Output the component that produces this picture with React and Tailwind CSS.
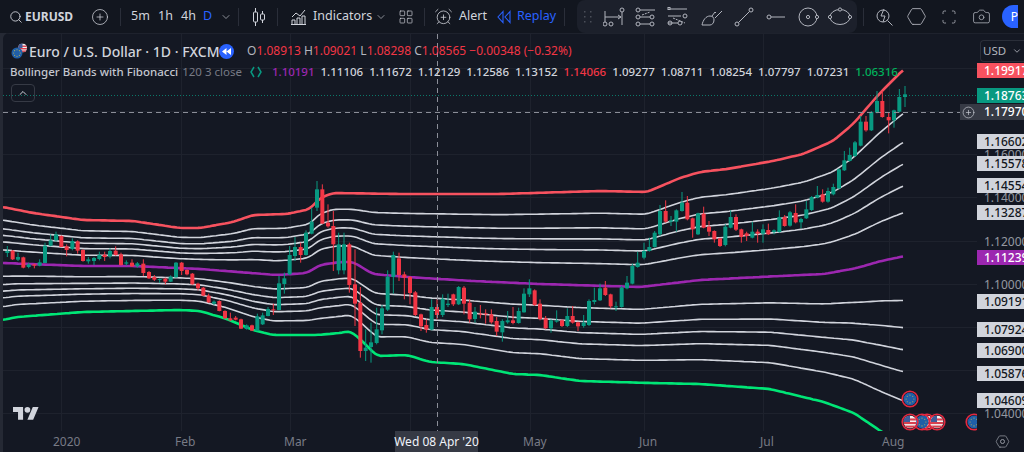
/*
 * EURUSD chart page - dark trading terminal with bollinger/fibonacci bands
 * candles are read off the screenshot in 3x crop coords and scaled at load
 */
import { Search, CirclePlus, ChevronDown, ChevronUp, LayoutGrid, AlarmClockPlus, Hexagon, Scan, Camera } from 'lucide-react';

const font = 'font-["Noto_Sans",sans-serif]';

// [x, bodyTop, bodyBottom, wickTop, wickBottom, colour]
const seg1 = [
  [22,210,216,195,228,'g'],[38,209,235,207,237,'r'],[54,228,236,215,240,'g'],[70,229,260,227,262,'r'],[86,250,258,245,262,'g'],[103,250,254,248,262,'r'],
  [119,244,254,235,256,'g'],[135,194,246,185,246,'g'],[152,178,194,160,196,'g'],[168,160,178,152,182,'g'],[184,165,198,163,198,'r'],[200,196,207,190,226,'r'],
  [217,180,204,172,208,'g'],[233,181,209,178,218,'r'],[249,207,240,205,242,'r'],[265,235,241,228,248,'g'],[282,231,240,228,252,'g'],[298,222,234,212,238,'g'],
  [314,221,228,212,240,'r'],[330,210,226,202,232,'g'],[347,209,222,196,224,'r'],[363,220,252,215,254,'r'],[379,244,248,238,254,'g'],[396,245,256,235,258,'r'],
  [412,247,256,243,260,'g'],[430,248,276,235,285,'r'],[447,273,292,270,294,'r'],[463,288,296,282,300,'r'],[479,294,297,292,306,'g'],[496,293,302,290,310,'r'],
  [512,287,302,283,303,'g'],[528,245,289,243,290,'g'],[545,245,270,243,282,'r'],[561,267,280,265,283,'r'],[577,278,310,276,311,'r'],[594,308,322,305,328,'r'],
  [610,320,344,318,345,'r'],[626,344,364,338,366,'r'],[642,362,368,358,372,'g'],[658,360,390,358,391,'r'],[675,390,412,388,414,'r'],[691,412,418,395,420,'r'],
  [707,410,416,405,418,'r'],[723,415,443,413,444,'r'],[740,433,444,430,446,'g'],[756,433,449,431,450,'r'],[772,406,449,398,450,'g'],[788,403,430,395,432,'g'],
  [804,384,405,378,406,'g'],[820,385,388,368,402,'r'],[837,307,387,285,388,'g'],[853,292,309,275,338,'g'],[869,222,280,195,282,'g'],[885,198,225,168,240,'g'],
  [902,198,222,185,245,'r'],[918,155,222,148,224,'g'],[935,122,158,80,160,'g'],[951,25,80,0,90,'g'],[967,25,128,10,128,'r'],[984,125,136,70,140,'r'],
  [1000,135,190,90,270,'r'],
];

const seg2 = [
  [-4,40,118,5,130,'g'],[12,40,118,5,130,'g'],[28,40,162,35,185,'r'],[45,160,218,55,285,'r'],[61,215,360,168,380,'r'],[77,350,360,295,390,'g'],[93,334,348,275,395,'g'],
  [110,295,336,230,340,'g'],[126,232,298,222,310,'g'],[143,137,236,118,240,'g'],[160,72,138,62,188,'g'],[177,82,132,65,150,'r'],[193,130,140,122,205,'r'],
  [210,138,186,135,220,'r'],[226,184,252,180,255,'r'],[243,250,286,248,300,'r'],[259,282,296,265,305,'r'],[275,228,296,205,298,'g'],[291,228,252,205,265,'r'],
  [308,203,252,190,258,'g'],[324,218,222,188,228,'g'],[340,190,220,188,225,'r'],[356,168,220,165,222,'g'],[372,170,218,165,250,'r'],[389,215,265,205,275,'r'],
  [405,242,264,228,275,'g'],[421,248,250,222,262,'r'],[437,247,250,235,278,'r'],[454,250,274,235,278,'r'],[470,270,302,258,315,'r'],[487,270,304,265,332,'g'],
  [503,268,274,240,278,'g'],[519,268,276,228,280,'r'],[536,240,276,230,278,'g'],[552,188,244,172,245,'g'],[568,172,190,145,198,'g'],[584,178,222,175,225,'r'],
  [600,218,264,205,268,'r'],[617,262,292,255,295,'r'],[633,268,292,265,305,'g'],[650,268,272,238,275,'g'],[666,268,285,265,288,'r'],[682,255,285,232,288,'g'],
  [698,255,275,225,278,'r'],[714,274,286,272,300,'r'],[731,275,285,252,290,'g'],[747,210,282,205,285,'g'],[763,207,213,170,220,'g'],[780,172,208,158,210,'g'],
  [796,170,192,150,195,'r'],[812,190,226,188,232,'r'],[828,226,229,212,240,'g'],[845,170,228,165,230,'g'],[861,155,172,135,175,'g'],[877,105,158,98,160,'g'],
  [893,95,108,62,110,'g'],
];

const seg3 = [
  [72,570,590,545,595,'g'],[88,558,570,530,572,'g'],[104,515,558,510,560,'g'],[120,450,520,432,525,'g'],[137,450,482,418,485,'r'],[153,478,482,465,495,'g'],[169,448,482,445,512,'g'],
  [186,425,450,393,452,'g'],[202,425,475,405,478,'r'],[218,472,505,470,530,'r'],[234,457,520,455,522,'g'],[251,458,500,437,502,'r'],[267,497,512,480,525,'r'],
  [283,510,535,508,545,'r'],[300,532,555,530,558,'r'],[316,497,552,490,556,'g'],[332,468,500,448,502,'g'],[348,468,506,460,510,'r'],[364,505,528,503,545,'r'],
  [380,517,525,512,540,'r'],[397,512,530,482,532,'g'],[413,512,518,505,545,'r'],[429,505,518,490,545,'g'],[445,507,520,488,522,'r'],[462,508,513,505,520,'g'],
  [478,468,513,448,515,'g'],[494,468,495,462,497,'r'],[510,454,494,450,497,'g'],[527,456,484,430,487,'r'],[543,474,484,470,502,'g'],[559,445,472,420,474,'g'],
  [575,408,447,405,450,'g'],[592,402,410,375,412,'g'],[608,400,422,385,425,'r'],[624,390,422,380,425,'g'],[640,378,400,368,403,'g'],[657,325,382,322,385,'g'],
  [673,298,328,270,330,'g'],[689,282,300,260,302,'g'],[705,244,285,240,288,'g'],[722,182,254,165,256,'g'],[738,182,208,165,212,'r'],[754,153,208,150,210,'g'],
  [771,120,155,90,157,'g'],[787,120,168,90,170,'r'],[806,168,178,155,217,'r'],[822,148,178,146,200,'g'],[838,108,152,84,155,'g'],[855,100,108,75,138,'g'],
];

const scaleSeg = (rows, ox, oy) => rows.map(([x, t, b, wt, wb, c]) => ({
  x: ox + x / 3, t: oy + t / 3, b: oy + b / 3, wt: oy + wt / 3, wb: oy + wb / 3, c,
}));

const candles = [...scaleSeg(seg1, 0, 180), ...scaleSeg(seg2, 340, 230), ...scaleSeg(seg3, 620, 60)];

const redPts = [[3,206],[33,212],[83,219],[133,220],[180,227],[200,227],[233,221],[253,214],[287,213],[310,208],[320,197],[333,192],[400,193],[500,193],[600,190],[647,191],[680,177],[700,171],[727,168],[773,160],[803,153],[833,140],[853,123],[880,92],[905,67]];
const purplePts = [[3,262],[83,265],[133,265],[200,268],[277,274],[307,272],[320,264],[340,261],[353,261],[373,273],[407,276],[473,280],[540,283],[640,286],[700,279],[780,275],[824,273],[857,267],[881,260],[905,255]];
const greenPts = [[3,319],[17,316],[83,311],[180,309],[200,310],[227,318],[253,329],[273,334],[317,334],[340,332],[350,330],[360,338],[377,355],[407,354],[430,361],[463,363],[513,373],[540,374],[580,380],[650,382],[700,383],[770,388],[824,401],[854,412],[882,431],[905,445]];

const lerp = (pts, x) => {
  for (let i = 1; i < pts.length; i++) {
    if (x <= pts[i][0]) {
      const [x0, y0] = pts[i - 1];
      const [x1, y1] = pts[i];
      return y0 + ((x - x0) / (x1 - x0)) * (y1 - y0);
    }
  }
  return pts[pts.length - 1][1];
};

// light moving average so the hand-read points don't show corners
const smooth = (pts, x) => {
  let sum = 0;
  for (let d = -4; d <= 4; d += 2) sum += lerp(pts, Math.min(905, Math.max(3, x + d)));
  return sum / 5;
};

const xs = [];
for (let x = 3; x <= 905; x += 3) xs.push(x);
const toPath = (fn) => xs.map((x) => `${x},${fn(x).toFixed(1)}`).join(' ');
const ratios = [0.234, 0.378, 0.495, 0.612, 0.766];

const vGrid = [61, 181, 290, 410, 530, 644, 763, 889];
const hGrid = [67, 110, 153, 196, 240, 283, 326, 369, 412];

const priceTags = [
  { text: '1.19917', pos: 'top-[29px]', cls: 'bg-[#f7525f] text-white' },
  { text: '1.18763', pos: 'top-[54px]', cls: 'bg-[#089981] text-white' },
  { text: '1.17970', pos: 'top-[70px] h-[16px]', cls: 'bg-[#363a45] text-white' },
  { text: '1.16602', pos: 'top-[100px]', cls: 'bg-[#d1d4dc] text-[#131722]' },
  { text: '1.15578', pos: 'top-[122px]', cls: 'bg-[#d1d4dc] text-[#131722]' },
  { text: '1.14554', pos: 'top-[144px]', cls: 'bg-[#d1d4dc] text-[#131722]' },
  { text: '1.13287', pos: 'top-[171px]', cls: 'bg-[#d1d4dc] text-[#131722]' },
  { text: '1.11239', pos: 'top-[216px]', cls: 'bg-[#9c27b0] text-white' },
  { text: '1.09191', pos: 'top-[260px]', cls: 'bg-[#d1d4dc] text-[#131722]' },
  { text: '1.07924', pos: 'top-[288px]', cls: 'bg-[#d1d4dc] text-[#131722]' },
  { text: '1.06900', pos: 'top-[309px]', cls: 'bg-[#d1d4dc] text-[#131722]' },
  { text: '1.05876', pos: 'top-[332px]', cls: 'bg-[#d1d4dc] text-[#131722]' },
  { text: '1.04609', pos: 'top-[359px]', cls: 'bg-[#d1d4dc] text-[#131722]' },
];

const axisLabels = [
  { text: '1.16000', pos: 'top-[113px]' },
  { text: '1.14000', pos: 'top-[156px]' },
  { text: '1.12000', pos: 'top-[200px]' },
  { text: '1.10000', pos: 'top-[243px]' },
  { text: '1.04000', pos: 'top-[372px]' },
];

const timeLabels = [
  { text: '2020', pos: 'left-[50px]' },
  { text: 'Feb', pos: 'left-[172px]' },
  { text: 'Mar', pos: 'left-[281px]' },
  { text: 'May', pos: 'left-[520px]' },
  { text: 'Jun', pos: 'left-[636px]' },
  { text: 'Jul', pos: 'left-[757px]' },
  { text: 'Aug', pos: 'left-[879px]' },
];

const bandValues = ['1.11106', '1.11672', '1.12129', '1.12586', '1.13152'];
const lowerValues = ['1.09277', '1.08711', '1.08254', '1.07797', '1.07231'];

function EuFlag({ cx, cy, r = 6 }) {
  const stars = [0, 1, 2, 3, 4, 5, 6, 7];
  return (
    <g>
      <circle cx={cx} cy={cy} r={r} fill="#1f5fa8" />
      {stars.map((s) => (
        <circle
          key={s}
          cx={cx + Math.cos((s * Math.PI) / 4) * r * 0.6}
          cy={cy + Math.sin((s * Math.PI) / 4) * r * 0.6}
          r="0.55"
          fill="#c9b64a"
        />
      ))}
    </g>
  );
}

function UsFlag({ cx, cy, r = 6, id }) {
  return (
    <g>
      <clipPath id={id}><circle cx={cx} cy={cy} r={r} /></clipPath>
      <g clipPath={`url(#${id})`}>
        <rect x={cx - r} y={cy - r} width={r * 2} height={r * 2} fill="#f2f2f2" />
        <rect x={cx - r} y={cy - r * 0.55} width={r * 2} height={r * 0.32} fill="#d8404f" />
        <rect x={cx - r} y={cy} width={r * 2} height={r * 0.32} fill="#d8404f" />
        <rect x={cx - r} y={cy + r * 0.55} width={r * 2} height={r * 0.32} fill="#d8404f" />
        <rect x={cx - r} y={cy - r} width={r} height={r} fill="#3f5c9a" />
      </g>
    </g>
  );
}

function Marker({ cx, cy, us, id }) {
  return (
    <g>
      {us ? <UsFlag cx={cx} cy={cy} r={6.5} id={id} /> : <EuFlag cx={cx} cy={cy} r={6.5} />}
      <circle cx={cx} cy={cy} r="7.8" fill="none" stroke="#e5283f" strokeWidth="1.6" />
    </g>
  );
}

function Divider({ cls }) {
  return <span className={`w-px h-[18px] bg-[#2a2e39] shrink-0 ${cls}`} />;
}

function ToolIcon({ w = 22, children, cls = '' }) {
  return (
    <svg width={w} height="22" viewBox={`0 0 ${w} 22`} fill="none" stroke="#b2b5be" strokeWidth="1" className={`shrink-0 ${cls}`}>
      {children}
    </svg>
  );
}

function DrawingTools() {
  return (
    <div className="w-[280px] h-[33px] ml-[12px] rounded-b-lg rounded-t-lg bg-[#1c202b] flex items-center shrink-0">
      <svg width="8" height="12" viewBox="0 0 8 12" fill="#4a4e59" className="ml-[7px] shrink-0">
        {[0, 5, 10].map((y) => (
          <g key={y}><rect x="0" y={y} width="1.5" height="1.5" /><rect x="6" y={y} width="1.5" height="1.5" /></g>
        ))}
      </svg>
      <ToolIcon w={22} cls="ml-[11px]">
        <path d="M2 5v11M19 6v13M2 11h16M15 9l3 2-3 2" />
        <circle cx="2" cy="18" r="2" /><circle cx="19" cy="4" r="2" /><circle cx="8" cy="18" r="2" />
      </ToolIcon>
      <ToolIcon w={21} cls="ml-[10px]">
        <circle cx="3" cy="4" r="2" /><circle cx="17" cy="11" r="2" /><circle cx="3" cy="11" r="2" /><circle cx="17" cy="18" r="2" /><circle cx="3" cy="18" r="2" />
        <path d="M5 4h15M5 11h10M5 18h10" /><path d="M7 9l8-3" strokeDasharray="2 1" />
      </ToolIcon>
      <ToolIcon w={21} cls="ml-[11px]">
        <circle cx="17" cy="4" r="0" /><circle cx="3" cy="10" r="0" />
        <path d="M1 3h19M1 6h0M1 10h13M1 17h10" /><circle cx="18" cy="10" r="2" /><circle cx="13" cy="17" r="2" /><circle cx="3" cy="17" r="2" />
        <rect x="1" y="1.5" width="2" height="2" /><path d="M6 12l12 5" strokeDasharray="2 1" />
      </ToolIcon>
      <ToolIcon w={22} cls="ml-[13px]">
        <path d="M1 19c1-5 4-9 8-9 3 0 4 2 4 4 0 3-2 5-4 5H1z" /><path d="M11 10l3-4 1 1M14 12l7-7" />
      </ToolIcon>
      <ToolIcon w={20} cls="ml-[11px]">
        <circle cx="3" cy="18" r="2" /><circle cx="17" cy="4" r="2" /><path d="M4.5 16.5l11-11" />
      </ToolIcon>
      <ToolIcon w={20} cls="ml-[12px]">
        <circle cx="3" cy="11" r="2" /><path d="M5 11h14" />
      </ToolIcon>
      <ToolIcon w={21} cls="ml-[12px]">
        <circle cx="10" cy="11" r="9" /><circle cx="10" cy="11" r="1.6" /><circle cx="19" cy="11" r="1.6" fill="#1c202b" />
      </ToolIcon>
      <ToolIcon w={24} cls="ml-[9px]">
        <ellipse cx="12" cy="11" rx="10" ry="7.5" /><circle cx="2" cy="11" r="1.6" fill="#1c202b" /><circle cx="22" cy="11" r="1.6" fill="#1c202b" /><circle cx="12" cy="3.5" r="1.6" fill="#1c202b" />
      </ToolIcon>
    </div>
  );
}

function Toolbar() {
  return (
    <header className={`h-[33px] shrink-0 flex items-center bg-[#12161f] text-[#d1d4dc] text-[12.5px] ${font}`}>
      <Search size={14} strokeWidth={1.5} className="ml-[9px] shrink-0" />
      <span className="ml-[2px] w-[66px] font-bold text-[12px]">EURUSD</span>
      <CirclePlus size={18} strokeWidth={1} className="shrink-0" />
      <Divider cls="ml-[11px]" />
      <span className="ml-[10px] w-[27px]">5m</span>
      <span className="w-[23px]">1h</span>
      <span className="w-[22px]">4h</span>
      <span className="w-[15px] text-[#2962ff]">D</span>
      <ChevronDown size={12} strokeWidth={1.5} className="ml-[2px] text-[#b2b5be] shrink-0" />
      <Divider cls="ml-[6px]" />
      <svg width="14" height="18" viewBox="0 0 14 18" fill="none" stroke="#d1d4dc" className="ml-[13px] shrink-0">
        <path d="M3.5 0v18M10.5 3v12" />
        <rect x="1.5" y="4" width="4" height="10" rx="1" fill="#12161f" />
        <rect x="8.5" y="6" width="4" height="6" rx="1" fill="#12161f" />
      </svg>
      <Divider cls="ml-[11px]" />
      <svg width="16" height="16" viewBox="0 0 16 16" fill="none" stroke="#d1d4dc" className="ml-[13px] shrink-0">
        <path d="M1 8l4-4 4 3 5-6" /><path d="M1 15v-4h3v4M6 15V9h3v6M11 15V7h3v8M0 15.5h15" />
      </svg>
      <span className="ml-[6px] w-[62px]">Indicators</span>
      <ChevronDown size={12} strokeWidth={1.5} className="text-[#b2b5be] shrink-0" />
      <LayoutGrid size={16} strokeWidth={1} className="ml-[11px] shrink-0" />
      <Divider cls="ml-[10px]" />
      <AlarmClockPlus size={19} strokeWidth={1} className="ml-[9px] shrink-0" />
      <span className="ml-[6px] w-[38px]">Alert</span>
      <svg width="14" height="14" viewBox="0 0 14 14" fill="none" stroke="#2962ff" strokeWidth="1.1" className="shrink-0">
        <path d="M6 1.5L1 7l5 5.5zM13 1.5L8 7l5 5.5z" />
      </svg>
      <span className="ml-[6px] w-[47px] text-[#2962ff]">Replay</span>
      <Divider />
      <DrawingTools />
      <Divider cls="ml-[6px]" />
      <svg width="17" height="18" viewBox="0 0 17 18" fill="none" stroke="#b2b5be" className="ml-[12px] shrink-0">
        <circle cx="7" cy="8" r="6" /><path d="M11.5 12.5l5 5" /><path d="M8 1L5 8h4l-2 6" fill="#12161f" />
      </svg>
      <Hexagon size={21} strokeWidth={1} className="ml-[13px] text-[#b2b5be] rotate-90 shrink-0" />
      <Scan size={16} strokeWidth={1.2} className="ml-[14px] text-[#b2b5be] shrink-0" />
      <Camera size={19} strokeWidth={1} className="ml-[15px] text-[#b2b5be] shrink-0" />
      <span className="ml-[11px] w-[16px] h-[23px] rounded-l-full bg-[#2962ff] text-white text-[12px] flex items-center justify-end overflow-hidden shrink-0">P</span>
    </header>
  );
}

function ChartCanvas() {
  const red = (x) => smooth(redPts, x);
  const purple = (x) => smooth(purplePts, x);
  const green = (x) => smooth(greenPts, x);

  return (
    <svg viewBox="3 33 974 398" width="974" height="398" className="absolute inset-0 block">
      {vGrid.map((x) => <path key={x} d={`M${x + 0.5} 33V431`} stroke="#1e222d" />)}
      {hGrid.map((y) => <path key={y} d={`M3 ${y + 0.5}H977`} stroke="#1e222d" />)}

      <path d="M3 94.5H977" stroke="#089981" strokeDasharray="1 2" opacity="0.75" />

      {ratios.map((k) => (
        <polyline key={`u${k}`} points={toPath((x) => purple(x) + k * (red(x) - purple(x)))} fill="none" stroke="#d1d4dc" strokeWidth="1.6" strokeLinejoin="round" />
      ))}
      {ratios.map((k) => (
        <polyline key={`l${k}`} points={toPath((x) => purple(x) + k * (green(x) - purple(x)))} fill="none" stroke="#d1d4dc" strokeWidth="1.6" strokeLinejoin="round" />
      ))}
      <polyline points={toPath(red)} fill="none" stroke="#f7525f" strokeWidth="2.6" strokeLinejoin="round" />
      <polyline points={toPath(purple)} fill="none" stroke="#9c27b0" strokeWidth="2.6" strokeLinejoin="round" />
      <polyline points={toPath(green)} fill="none" stroke="#00e676" strokeWidth="2.6" strokeLinejoin="round" />

      {candles.map((c, i) => (
        <g key={i} fill={c.c === 'g' ? '#089981' : '#f23645'}>
          <rect x={c.x - 0.5} y={c.wt} width="1" height={c.wb - c.wt} />
          <rect x={c.x - 2} y={c.t} width="4" height={Math.max(1, c.b - c.t)} />
        </g>
      ))}

      {/* crosshair */}
      <path d="M437.5 33V431" stroke="#8b8e98" strokeDasharray="5 4" />
      <path d="M3 111.5H960" stroke="#8b8e98" strokeDasharray="5 4" />

      {/* event markers */}
      <Marker cx={910} cy={398} />
      <Marker cx={927} cy={421} us id="m1" />
      <Marker cx={937} cy={421} us id="m2" />
      <Marker cx={922} cy={421} />
      <Marker cx={910} cy={421} us id="m3" />
      <Marker cx={974} cy={421} />

      {/* tradingview logo */}
      <g transform="translate(13 403) scale(0.72)" fill="#d1d4dc">
        <path d="M14 22H7V11H0V4h14v18zM28 22h-8l7.5-18h8L28 22z" />
        <circle cx="20" cy="8" r="4" />
      </g>
    </svg>
  );
}

function Legend() {
  return (
    <div className={`absolute left-[7px] top-[6px] ${font}`}>
      <div className="flex items-center h-[22px]">
        <svg width="18" height="18" viewBox="0 0 18 18" className="shrink-0">
          <UsFlag cx={12.5} cy={6} r={4.5} id="legend-us" />
          <EuFlag cx={7} cy={11} r={5.5} />
        </svg>
        <span className="ml-[1px] w-[190px] text-[14px] font-medium text-[#d1d4dc] whitespace-nowrap">Euro / U.S. Dollar · 1D · FXCM</span>
        <span className="w-[15px] h-[15px] rounded-full bg-[#2962ff] flex items-center justify-center shrink-0">
          <svg width="9" height="7" viewBox="0 0 9 7" fill="white"><path d="M4.5 0v7L0 3.5zM9 0v7L4.5 3.5z" /></svg>
        </span>
        <span className="ml-[13px] text-[12px] text-[#f23645] whitespace-nowrap">
          <b className="font-normal text-[#b2b5be]">O</b>1.08913 <b className="font-normal text-[#b2b5be]">H</b>1.09021 <b className="font-normal text-[#b2b5be]">L</b>1.08298 <b className="font-normal text-[#b2b5be]">C</b>1.08565 −0.00348 (−0.32%)
        </span>
      </div>
      <div className="flex items-center h-[20px] text-[11.5px] whitespace-nowrap">
        <span className="font-medium text-[#c4c7cf]">Bollinger Bands with Fibonacci</span>
        <span className="ml-[4px] text-[#787b86]">120 3 close</span>
        <svg width="14" height="14" viewBox="0 0 14 14" fill="none" stroke="#089981" strokeWidth="1.5" className="ml-[7px] shrink-0">
          <path d="M5 2L2 7l3 5M9 2l3 5-3 5" />
        </svg>
        <span className="ml-[9px] flex gap-[6px] font-medium text-[#d1d4dc]">
          <span className="text-[#9c27b0]">1.10191</span>
          {bandValues.map((v) => <span key={v}>{v}</span>)}
          <span className="text-[#f23645]">1.14066</span>
          {lowerValues.map((v) => <span key={v}>{v}</span>)}
          <span className="text-[#00b35c]">1.06316</span>
        </span>
      </div>
      <button className="mt-[2px] ml-[1px] w-[24px] h-[18px] rounded border border-[#363a45] flex items-center justify-center text-[#d1d4dc]">
        <ChevronUp size={12} strokeWidth={2} />
      </button>
    </div>
  );
}

export default function App() {
  return (
    <div className="w-[1024px] h-[452px] flex flex-col overflow-hidden bg-[#141823]">
      <Toolbar />
      <div className="flex-1 flex min-h-0 bg-[#252934]">
        <div className="w-[3px] shrink-0" />
        <div className="flex-1 flex flex-col bg-[#141823] rounded-tl-md overflow-hidden min-w-0">
          <div className="flex-1 flex min-h-0 border-t border-[#1e222d]">
            <div className="relative w-[974px] shrink-0 overflow-hidden">
              <ChartCanvas />
              <Legend />
              <span className="absolute left-[957px] top-[70px] w-[17px] h-[16px] bg-[#363a45] flex items-center justify-center text-[#d1d4dc]">
                <CirclePlus size={13} strokeWidth={1.2} />
              </span>
            </div>
            {/* price scale */}
            <div className={`relative flex-1 text-[12px] ${font}`}>
              <div className="absolute left-[3px] top-[6px] w-[44px] h-[22px] rounded-l border border-r-0 border-[#2a2e39] flex items-center pl-[2px] text-[11.5px] text-[#b2b5be]">
                USD
                <ChevronDown size={10} className="ml-[6px]" />
              </div>
              {axisLabels.map((l) => (
                <span key={l.text} className={`absolute left-[7px] ${l.pos} text-[#9598a1] leading-[15px]`}>{l.text}</span>
              ))}
              {priceTags.map((t) => (
                <span key={t.text} className={`absolute left-0 w-[47px] h-[15px] leading-[15px] pl-[7px] ${t.pos} ${t.cls} font-medium`}>{t.text}</span>
              ))}
            </div>
          </div>
          {/* time scale */}
          <div className={`relative h-[21px] shrink-0 text-[12px] text-[#787b86] ${font}`}>
            {timeLabels.map((l) => (
              <span key={l.text} className={`absolute top-[2px] ${l.pos}`}>{l.text}</span>
            ))}
            <span className="absolute left-[392px] top-0 w-[83px] h-[21px] bg-[#363a45] text-[#f0f3fa] flex items-center justify-center whitespace-nowrap">Wed 08 Apr '20</span>
            <Hexagon size={15} strokeWidth={1.2} className="absolute left-[992px] top-[3px] rotate-90 text-[#9598a1]" />
            <span className="absolute left-[997px] top-[8px] w-[5px] h-[5px] rounded-full border border-[#9598a1]" />
          </div>
        </div>
      </div>
    </div>
  );
}
